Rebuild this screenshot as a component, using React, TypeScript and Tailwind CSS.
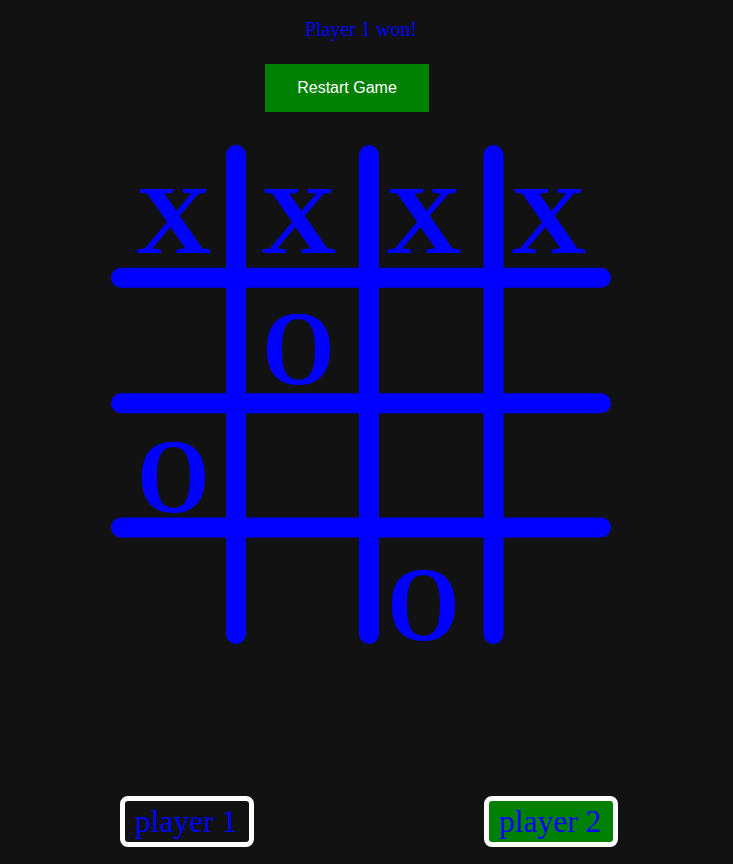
import React from "react";

type Mark = "X" | "O" | "";

const board: Mark[][] = [
  ["X", "X", "X", "X"],
  ["", "O", "", ""],
  ["O", "", "", ""],
  ["", "", "O", ""],
];

const serif = { fontFamily: '"Liberation Serif", "Times New Roman", serif' };

function GridLines() {
  // board lines, drawn under the marks
  const v = [125, 258, 382.5];
  const h = [132.7, 258.3, 382.5];
  return (
    <svg
      className="absolute left-0 top-0"
      width={500}
      height={500}
      viewBox="0 0 500 500"
    >
      {v.map((x) => (
        <line
          key={"v" + x}
          x1={x}
          y1={10}
          x2={x}
          y2={489}
          stroke="#0000ff"
          strokeWidth={20}
          strokeLinecap="round"
        />
      ))}
      {h.map((y) => (
        <line
          key={"h" + y}
          x1={10}
          y1={y}
          x2={490}
          y2={y}
          stroke="#0000ff"
          strokeWidth={20}
          strokeLinecap="round"
        />
      ))}
    </svg>
  );
}

function Cell({ mark }: { mark: Mark }) {
  return (
    <div
      className={`flex h-[128px] items-center justify-center text-[100px] font-bold leading-[128px] text-[#0000ff] ${
        mark === "O" ? "scale-x-[0.93] scale-y-[1.05]" : "scale-x-[1.05] scale-y-[0.97]"
      }`}
      style={serif}
    >
      {mark}
    </div>
  );
}

function PlayerTag({ name, active }: { name: string; active?: boolean }) {
  return (
    <div
      className={`flex h-[51px] w-[134px] items-center rounded-[8px] border-[5px] border-white pl-[10px] text-[31.5px] leading-normal text-[#0000ff] ${
        active ? "bg-[#008000]" : "bg-[#121212]"
      }`}
      style={serif}
    >
      {name}
    </div>
  );
}

export default function App() {
  return (
    <div className="min-h-[864px] w-[733px] bg-[#121212]">
      <div className="w-[722px] pt-[14px] text-center">
        <div className="text-[20px] leading-normal text-[#0000ff]" style={serif}>
          Player 1 won!
        </div>
      </div>

      <button
        className="ml-[265px] mt-[20px] block h-[48px] w-[164px] bg-[#008000] text-[16px] text-white"
        style={{ fontFamily: '"Liberation Sans", Arial, sans-serif' }}
      >
        Restart Game
      </button>

      <div className="relative ml-[111px] mt-[33px] h-[500px] w-[500px]">
        <GridLines />
        <div className="relative grid grid-cols-4 pt-[12px]">
          {board.flat().map((m, i) => (
            <Cell key={i} mark={m} />
          ))}
        </div>
      </div>

      <div className="ml-[120px] mt-[151px] flex gap-[230px]">
        <PlayerTag name="player 1" />
        <PlayerTag name="player 2" active />
      </div>
    </div>
  );
}
